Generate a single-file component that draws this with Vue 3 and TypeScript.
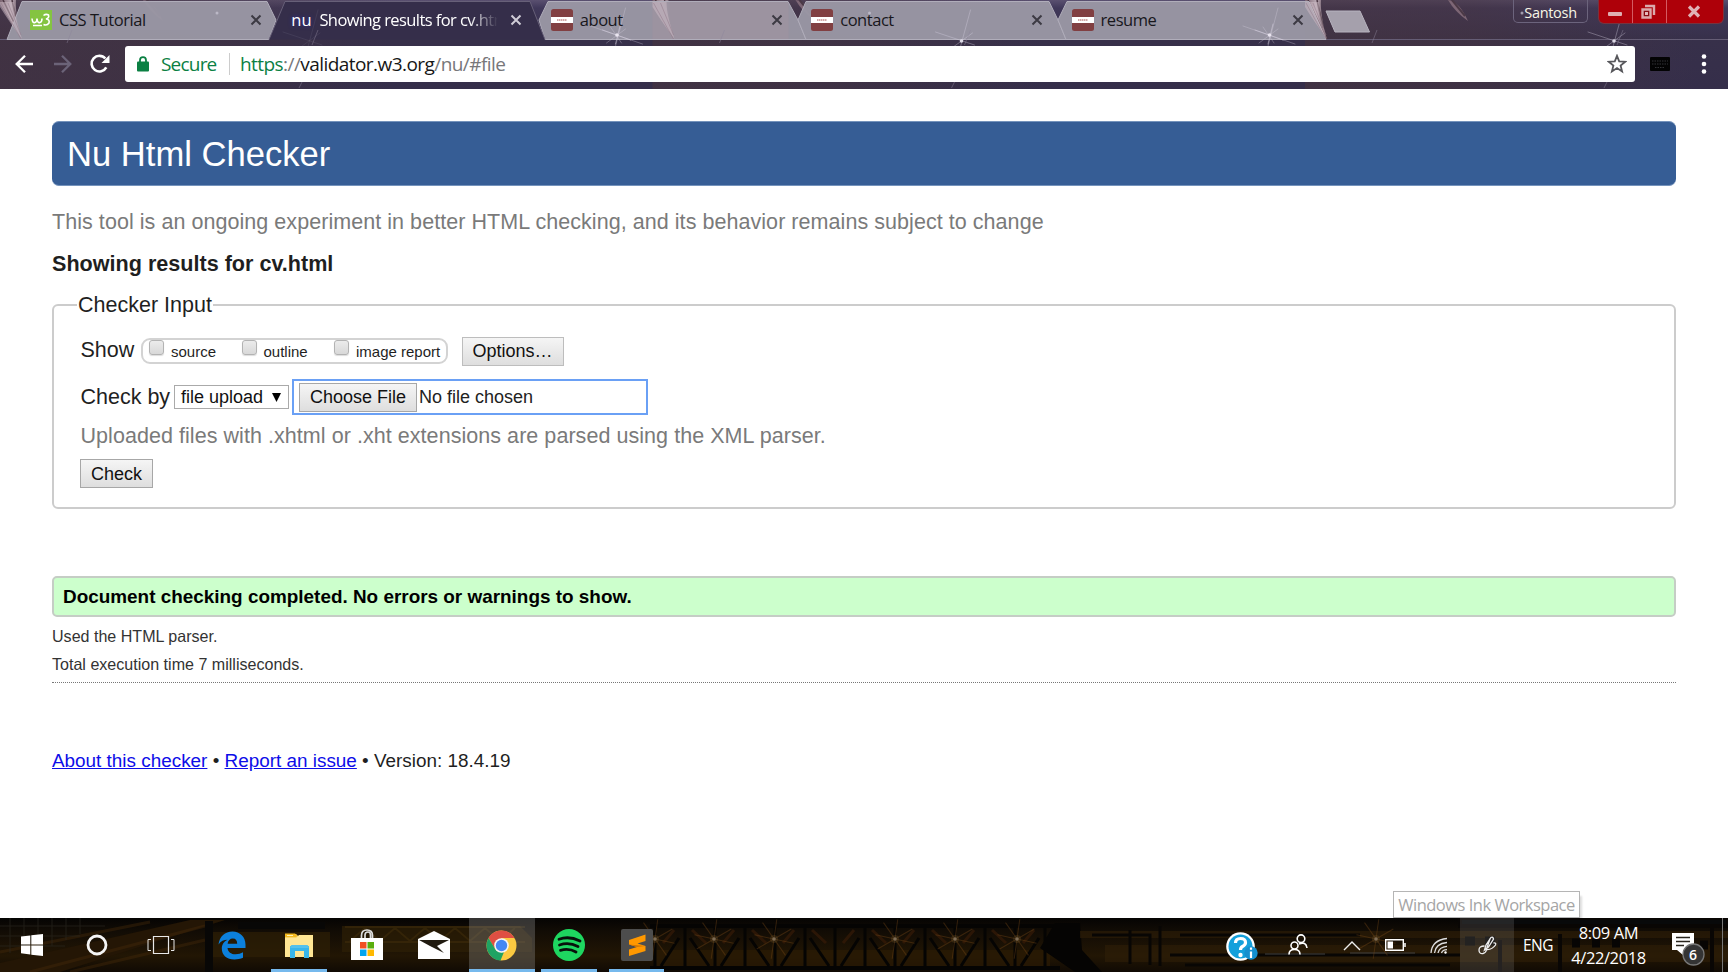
<script setup lang="ts">
interface Tab {
  title: string
  icon: 'w3' | 'nu' | 'site'
  active?: boolean
}

const tabs: Tab[] = [
  { title: 'CSS Tutorial', icon: 'w3' },
  { title: 'Showing results for cv.html', icon: 'nu', active: true },
  { title: 'about', icon: 'site' },
  { title: 'contact', icon: 'site' },
  { title: 'resume', icon: 'site' },
]

const checks: string[] = ['source', 'outline', 'image report']

const tabShapes: string[] = [
  'M7 39.5L22 1.5H267L276 20L269 39.5Z',
  'M545 39.5L539 20L548 1.5H788L798 20L806 39.5Z',
  'M806 39.5L798 20L806 1.5H1049L1058 20L1066 39.5Z',
  'M1066 39.5L1058 20L1067 1.5H1309L1326 39.5Z',
]

const tiles: number[] = [0, 652.5, 1305]
const lamps: number[] = [655, 714, 774, 895, 955, 1017, 1376]
const rays: number[] = [12, 55, 98, 150]
const trusses: number[] = [0, 1, 2, 3, 4, 5, 6]
</script>

<template>
  <div class="screen">
    <header class="browser">
      <svg class="theme" width="1728" height="89" viewBox="0 0 1728 89">
        <defs>
          <linearGradient id="strip" x1="0" y1="0" x2="0" y2="1">
            <stop offset="0" stop-color="#5a5070" />
            <stop offset="0.09" stop-color="#40385a" />
            <stop offset="0.45" stop-color="#37304a" />
            <stop offset="1" stop-color="#352e4a" />
          </linearGradient>
          <linearGradient id="warm" x1="0" y1="0" x2="1" y2="0">
            <stop offset="0" stop-color="#46343f" stop-opacity="0.65" />
            <stop offset="0.3" stop-color="#46343f" stop-opacity="0.55" />
            <stop offset="0.7" stop-color="#46343f" stop-opacity="0" />
          </linearGradient>
          <linearGradient id="feather" x1="0" y1="0" x2="1" y2="0">
            <stop offset="0" stop-color="#8d737e" />
            <stop offset="0.5" stop-color="#dccbd3" />
            <stop offset="1" stop-color="#6a5260" />
          </linearGradient>
        </defs>
        <rect width="1728" height="89" fill="url(#strip)" />
        <rect v-for="t in tiles" :key="'w' + t" :x="t" y="0" width="560" height="89" fill="url(#warm)" />
        <path d="M0 39.5H269M545 39.5H1728" stroke="#655d75" fill="none" />
        <g v-for="t in tiles" :key="'f' + t" :transform="`translate(${t} 0)`">
          <path d="M0 0H16Q15 14 22 40Q10 20 0 4Z" fill="url(#feather)" opacity="0.75" />
          <path d="M3 0L22 39M12 0L18 28" stroke="#4c3844" stroke-width="1.5" fill="none" />
          <path d="M143 0Q154 1 163 21Q150 12 143 0Z" fill="#7d6675" />
          <path d="M147 0L160 16" stroke="#4b3946" stroke-width="2" />
        </g>
        <path v-for="s in tabShapes" :key="s" :d="s" fill="#9a97a4" fill-opacity="0.96" stroke="#b0adba" stroke-width="1" />
        <path d="M269 39.5L285 1.5H530L545 39.5" fill="#352e4a" stroke="#676078" />
        <rect x="652.5" y="2" width="136" height="37" fill="#a594a0" opacity="0.4" />
        <g v-for="t in tiles" :key="'s' + t" :transform="`translate(${t} 0)`">
          <path d="M0 2H14Q14 14 22 39Q8 20 0 7Z" fill="#d0bec7" opacity="0.5" />
          <path d="M1 3L21 39M8 3L21 35" stroke="#8f7887" opacity="0.5" fill="none" />
          <g stroke="#d9d4e4" fill="none" stroke-linecap="round">
            <path d="M-62 26L-10 44M-27 8L-38 50M-46 43L-27 29M-42 27L-31 43" opacity="0.3" />
            <path d="M-50 30L-22 40M-32 24L-37 44" opacity="0.5" />
            <path d="M283 32L322 45M318 10L306 54M298 49L320 33" :opacity="t === 0 ? 0.08 : 0.35" />
          </g>
          <circle cx="-35.500" cy="35" r="1.800" fill="#eeeaf4" opacity="0.9" />
          <circle cx="309" cy="41" :r="t === 0 ? 0 : 1.800" fill="#e8e4ef" opacity="0.9" />
          <circle cx="217" cy="13" r="1.500" fill="#cbc7d5" opacity="0.7" />
          <path d="M72 30L67 43M318 30L312 45M302 82L299 88" stroke="#8d859b" opacity="0.45" />
        </g>
        <path d="M1326 11H1360L1369.500 32H1335Z" fill="#a5a0ac" stroke="#b7b3bf" />
      </svg>

      <div class="strip">
        <div class="tabs">
          <div v-for="tab in tabs" :key="tab.title" class="tab" :class="{ active: tab.active }">
            <svg v-if="tab.icon === 'w3'" class="fav" width="22" height="20" viewBox="0 0 22 20">
              <rect width="22" height="20" fill="#84c441" />
              <path d="M2 8.500Q2.500 13.500 5 12.500Q7 12 7 8.500Q7.500 13.500 10 12.500Q12 12 12 8.500M13.500 5.500Q16 3.500 18.500 5Q19.500 8 16 9Q20 9.500 19 13Q17 16 13.500 14.500M3 15.500H12" stroke="#fff" stroke-width="1.600" fill="none" />
            </svg>
            <span v-else-if="tab.icon === 'nu'" class="fav nu">nu</span>
            <svg v-else class="fav" width="22" height="22" viewBox="0 0 22 22">
              <rect width="22" height="22" rx="2.500" fill="#813f42" />
              <rect y="8" width="22" height="6" fill="#fff" />
              <path d="M6 11H16" stroke="#c58e8d" stroke-width="1.500" stroke-dasharray="1.500 0.500" />
            </svg>
            <span class="tab-title">{{ tab.title }}</span>
            <svg class="close" width="12" height="12" viewBox="0 0 12 12">
              <path d="M1.500 1.500L10.500 10.500M10.500 1.500L1.500 10.500" stroke="currentColor" stroke-width="2" />
            </svg>
          </div>
        </div>
        <div class="user">Santosh</div>
        <div class="controls">
          <span class="ctl min"><i></i></span>
          <span class="ctl restore">
            <svg width="18" height="18" viewBox="0 0 18 18">
              <path d="M6 3H15V12" stroke="#dba9ac" stroke-width="2.400" fill="none" />
              <path d="M3.500 6.500H11.500V14.500H3.500Z" stroke="#dba9ac" stroke-width="2.400" fill="#8a0a12" />
              <rect x="6" y="9" width="3" height="3" fill="#e5b9bb" />
            </svg>
          </span>
          <span class="ctl quit">
            <svg width="14" height="13" viewBox="0 0 14 13">
              <path d="M2 1.500L12 11.500M12 1.500L2 11.500" stroke="#e0b2b5" stroke-width="3.200" />
            </svg>
          </span>
        </div>
      </div>

      <div class="toolbar">
        <svg class="nav" width="125" height="36" viewBox="0 0 125 36" fill="none">
          <path d="M33 18H17M25 9.700L16.700 18L25 26.300" stroke="#fff" stroke-width="2.300" />
          <path d="M54 18H70M62 9.700L70.300 18L62 26.300" stroke="#6b6378" stroke-width="2.300" />
          <path d="M106.300 21.300A7.800 7.800 0 1 1 105.300 12.500" stroke="#fff" stroke-width="2.600" />
          <path d="M109.500 9V17H101.500Z" fill="#fff" />
        </svg>
        <div class="omnibox">
          <svg class="lock" width="12" height="16" viewBox="0 0 12 16">
            <rect x="0" y="5.500" width="12" height="10" rx="1" fill="#0b8043" />
            <path d="M3 6V4.200A3 3 0 0 1 9 4.200V6" stroke="#0b8043" stroke-width="1.800" fill="none" />
          </svg>
          <span class="secure">Secure</span>
          <span class="bar"></span>
          <span class="url"><em>https</em>://<b>validator.w3.org</b>/nu/#file</span>
          <svg class="star" width="20" height="20" viewBox="0 0 20 20">
            <path d="M10 1.800L12.200 7.300L18.200 7.700L13.600 11.500L15.100 17.400L10 14.100L4.900 17.400L6.400 11.500L1.800 7.700L7.800 7.300Z" fill="none" stroke="#57575b" stroke-width="1.800" />
          </svg>
        </div>
        <svg class="keyboard" width="20" height="14" viewBox="0 0 20 14">
          <rect width="20" height="14" rx="1" fill="#030304" />
          <path d="M2 4H18M2 7H18M5 10.500H15" stroke="#343438" stroke-dasharray="1.500 1" />
        </svg>
        <svg class="dots" width="6" height="22" viewBox="0 0 6 22" fill="#fff">
          <circle cx="3" cy="3.500" r="2.300" /><circle cx="3" cy="11" r="2.300" /><circle cx="3" cy="18.500" r="2.300" />
        </svg>
      </div>
    </header>

    <main class="page">
      <h1>Nu Html Checker</h1>
      <p class="intro">This tool is an ongoing experiment in better HTML checking, and its behavior remains subject to change</p>
      <h2>Showing results for cv.html</h2>

      <section class="fieldset">
        <div class="legend">Checker Input</div>
        <div class="row show-row">
          <span class="label show-label">Show</span>
          <div class="checks">
            <label v-for="c in checks" :key="c"><i class="box"></i>{{ c }}</label>
          </div>
          <button class="btn options" type="button">Options…</button>
        </div>
        <div class="row by-row">
          <span class="label by-label">Check by</span>
          <div class="select">file upload<svg width="9" height="9" viewBox="0 0 9 9"><path d="M0 0H9L4.500 9Z" /></svg></div>
          <div class="file">
            <button class="btn choose" type="button">Choose File</button>
            <span>No file chosen</span>
          </div>
        </div>
        <p class="hint">Uploaded files with .xhtml or .xht extensions are parsed using the XML parser.</p>
        <button class="btn check" type="button">Check</button>
      </section>

      <p class="success">Document checking completed. No errors or warnings to show.</p>
      <p class="detail">Used the HTML parser.</p>
      <p class="detail">Total execution time 7 milliseconds.</p>
      <div class="rule"></div>
      <footer><a>About this checker</a> • <a>Report an issue</a> • <span>Version: 18.4.19</span></footer>
    </main>

    <div class="taskbar">
      <div class="tooltip">Windows Ink Workspace</div>
      <svg class="wall" width="1728" height="54" viewBox="0 0 1728 54">
        <defs>
          <linearGradient id="ground" x1="0" y1="0" x2="0" y2="1">
            <stop offset="0" stop-color="#050403" />
            <stop offset="0.25" stop-color="#120c05" />
            <stop offset="0.7" stop-color="#221604" />
            <stop offset="1" stop-color="#100a04" />
          </linearGradient>
        </defs>
        <rect width="1728" height="54" fill="url(#ground)" />
        <path d="M0 45L190 2H225L60 54H0Z" fill="#241605" />
        <path d="M0 34L150 4M30 54L205 8M70 54L205 22" stroke="#472b0a" stroke-width="3" opacity="0.4" />
        <path d="M0 8H105M0 18H80M0 28H65M10 0V35M24 0V33M38 0V30M52 0V28M66 0V22M80 0V16" stroke="#2d2b22" opacity="0.6" />
        <path d="M205 3H213V54H205ZM238 4H325V11H238Z" fill="#080706" />
        <path d="M213 14H330V39H213ZM342 8H520L532 20V34H342Z" fill="#2e2006" opacity="0.7" />
        <path d="M345 9H525M345 24H525M350 23L365 10L380 23L395 10L410 23L425 10L440 23L455 10L470 23L485 10L500 23L515 10" stroke="#4a340c" stroke-width="2" fill="none" opacity="0.4" />
        <rect x="655" y="32" width="395" height="18" fill="#2d1c05" opacity="0.65" />
        <path d="M650 8H1060M650 50H1060" stroke="#050403" stroke-width="4" />
        <g v-for="n in trusses" :key="n" :transform="`translate(${655 + n * 60} 0)`">
          <path d="M0 10V48M6 48L24 20M54 48L35 20M30 10V48" stroke="#050403" stroke-width="3" fill="none" />
          <path d="M8 25L19 12M37 12L51 25" stroke="#3c1d08" stroke-width="3" opacity="0.6" />
        </g>
        <path d="M1055 5H1080L1082 32L1102 54H1075L1040 30Z" fill="#050403" />
        <path d="M1080 13H1728V20H1080ZM1105 27H1728V44H1105Z" fill="#2e1e08" opacity="0.62" />
        <path d="M1092 17H1150V47M1130 12V46M1160 8V48M1170 37H1460M1180 17H1360M1185 47H1450" stroke="#080604" stroke-width="3" fill="none" />
        <path d="M1350 35H1415M1265 36H1325" stroke="#404040" stroke-width="2" opacity="0.5" />
        <path d="M1460 0H1728V8H1460ZM1500 22V54M1560 16V54M1712 8V54" fill="#08090a" stroke="#090604" stroke-width="4" />
        <path d="M1465 23H1475M1485 23H1495M1572 25H1580M1592 25H1600M1612 25H1620M1700 27H1708" stroke="#070504" stroke-width="9" />
        <g v-for="x in lamps" :key="x" :transform="`translate(${x} 21)`">
          <path v-for="r in rays" :key="r" d="M-20 0H20" :transform="`rotate(${r})`" stroke="#7a4a18" opacity="0.38" />
          <circle r="4" fill="#6b5028" opacity="0.35" />
          <circle r="1.800" fill="#8f8270" opacity="0.7" />
        </g>
      </svg>

      <div class="apps">
        <span class="app sys">
          <svg width="22" height="22" viewBox="0 0 22 22" fill="#fff"><path d="M0 2.600L9.300 1.500V10.400H0ZM10.300 1.300L22 0V10.400H10.300ZM0 11.400H9.300V20.500L0 19.300ZM10.300 11.400H22V22L10.300 20.700Z" /></svg>
        </span>
        <span class="app sys">
          <svg width="22" height="22" viewBox="0 0 22 22"><circle cx="11" cy="11" r="9" fill="none" stroke="#f5f5f5" stroke-width="2.800" /></svg>
        </span>
        <span class="app sys">
          <svg width="28" height="20" viewBox="0 0 28 20" fill="none" stroke="#e8e8e8"><path d="M6.500 1.500H21.500V18.500H6.500Z" stroke-width="1.200" /><path d="M4 4.500H1V15.500H4M24 4.500H27V15.500H24" stroke-width="1" /></svg>
        </span>
        <span class="gap"></span>
        <span class="app">
          <svg width="28" height="29" viewBox="0 0 28 29"><path d="M.5 13.500C1.500 5.500 7 .5 14.500 .5C22 .5 27.500 6 27.500 13.500V17H9.500C10 21 13 23.300 17.500 23.300C20.500 23.300 23 22.500 25 21.300V26.800C22.500 28 19.500 28.500 16.500 28.500C8.500 28.500 3.800 24 3.800 17.500C3.800 13.500 6 10.300 9.500 8.700C6 8.700 2.700 10 .5 13.500ZM9.600 12.700H19.200C19.200 9.500 17.800 7.500 14.800 7.500C12 7.500 10 9.500 9.600 12.700Z" fill="#0c80dc" /></svg>
        </span>
        <span class="app running">
          <svg width="30" height="26" viewBox="0 0 30 26"><path d="M1 2H12L14 4H29V25H1Z" fill="#f8d56a" /><path d="M1 6H12L15 3H29V25H1Z" fill="#ffe694" /><path d="M1 1.500H11L13.500 4L12 5H1Z" fill="#f3b91e" /><path d="M3 3.500H9" stroke="#fff1b5" /><path d="M6 14.500L8 13H23L25 14.500V26H20V19H11V26H6Z" fill="#38b5ea" /><path d="M8 13H23L25 16H6Z" fill="#55c1ec" /></svg>
        </span>
        <span class="app">
          <svg width="32" height="32" viewBox="0 0 32 32"><path d="M10.500 9V6.500Q10.500 1 16 1Q21.500 1 21.500 6.500V9M14 9V6Q14 3 17 3Q19.500 3 19.500 6V9" fill="none" stroke="#ddd" stroke-width="1.700" /><path d="M0 9H32V31H0Z" fill="#fff" /><path d="M9 13H15.500V19.500H9Z" fill="#f25022" /><path d="M16.500 13H23V19.500H16.500Z" fill="#5aae0d" /><path d="M9 20.500H15.500V27H9Z" fill="#00a4ef" /><path d="M16.500 20.500H23V27H16.500Z" fill="#ffb900" /></svg>
        </span>
        <span class="app">
          <svg width="32" height="28" viewBox="0 0 32 28"><path d="M0 8L16 0L32 8V28H0Z" fill="#fff" /><path d="M1 9H31L19 15L26 22L12 15Z" fill="#211b10" /></svg>
        </span>
        <span class="app running current">
          <svg width="31" height="31" viewBox="0 0 31 31"><circle cx="15.500" cy="15.500" r="15" fill="#fbc941" /><path d="M2.500 8A15 15 0 0 1 28.500 8H15.500L9 19Z" fill="#df4f43" /><path d="M2.500 8L9.500 19.500Q12 23 18 22L14.500 30.500A15 15 0 0 1 2.500 8Z" fill="#1fa363" /><circle cx="15.500" cy="15.500" r="7.300" fill="#f4f4f4" /><circle cx="15.500" cy="15.500" r="5.700" fill="#4487f4" /></svg>
        </span>
        <span class="app running">
          <svg width="32" height="32" viewBox="0 0 32 32"><circle cx="16" cy="16" r="16" fill="#1ed760" /><path d="M6 10.300Q16 6.500 27 12M6.500 16Q16 12.800 25 17.500M7.500 21.300Q16 19 23 23" stroke="#08120b" fill="none" stroke-width="2.800" stroke-linecap="round" /></svg>
        </span>
        <span class="app running">
          <svg width="32" height="32" viewBox="0 0 32 32"><rect width="32" height="32" rx="2" fill="#4d4d4d" /><path d="M8 11L24.500 5.500V12L16.500 14.500L24.500 17V22L8 27V20.500L16 18L8 15.500Z" fill="#ff9800" /><path d="M8 15.500L24.500 17L16 18Z" fill="#d37600" /></svg>
        </span>
      </div>

      <div class="tray">
        <span class="cell help">
          <svg width="32" height="30" viewBox="0 0 32 30"><circle cx="14.500" cy="14.500" r="14.300" fill="#fff" /><circle cx="14.500" cy="14.500" r="12" fill="#14a0db" /><path d="M9.500 11Q9.500 6.500 14.500 6.500Q19.500 6.500 19.500 10.500Q19.500 13 16.500 14.500Q14.500 15.500 14.500 18" stroke="#fff" stroke-width="3.200" fill="none" /><circle cx="14.500" cy="23" r="2.200" fill="#fff" /><circle cx="25" cy="21" r="6.700" fill="#148fce" /><path d="M25 19.500V26M25 15.500V17.800" stroke="#fff" stroke-width="2.200" /></svg>
        </span>
        <span class="cell people">
          <svg width="20" height="22" viewBox="0 0 20 22" fill="none" stroke="#fff" stroke-width="1.600"><circle cx="6.500" cy="11.500" r="3.500" /><path d="M1 20.500Q1 15.500 6.500 15.500Q12 15.500 12 20.500" /><circle cx="13" cy="4.700" r="3.800" /><path d="M11 10Q18 7 19 14" /></svg>
        </span>
        <span class="cell arrow">
          <svg width="18" height="11" viewBox="0 0 18 11"><path d="M1 10L9 2L17 10" fill="none" stroke="#eee" stroke-width="1.400" /></svg>
        </span>
        <span class="cell battery">
          <svg width="21" height="12" viewBox="0 0 21 12"><path d="M.7 .7H18.300V11.300H.7Z" fill="none" stroke="#fff" stroke-width="1.400" /><path d="M2.500 2.500H8V9.500H2.500Z" fill="#fff" /><path d="M20 4V8" stroke="#fff" stroke-width="1.500" /></svg>
        </span>
        <span class="cell wifi">
          <svg width="18" height="18" viewBox="0 0 18 18" fill="none" stroke="#ddd" stroke-width="1.300"><path d="M1 16Q2 3 17 1.500M4.500 16Q5.500 6.500 17 5.500M8 16Q9 10 17 9.300M11.500 16Q12.500 13 17 12.700" /><circle cx="15.500" cy="15.500" r="1.200" fill="#fff" stroke="none" /></svg>
        </span>
        <span class="cell pen">
          <svg width="19" height="19" viewBox="0 0 19 19" fill="none" stroke="#eee" stroke-width="1.300"><path d="M6.500 14L8 9L13 1.500Q15 .5 15.500 3L10.500 11L6.500 14ZM12 3L8.500 13" /><path d="M6.500 10Q1 10 1 14Q1 18 5 17.500Q8 17 8.500 13.500Q14 14 17.500 9Q18.500 6.500 15.500 7" /></svg>
        </span>
        <span class="cell lang">ENG</span>
        <span class="cell clock"><span>8:09 AM</span><span>4/22/2018</span></span>
        <span class="cell notes">
          <svg width="34" height="34" viewBox="0 0 34 34"><path d="M0 1H22V18H11V23L5 18H0Z" fill="#fff" /><path d="M4 5.500H18M4 9.500H18M4 13.500H12" stroke="#29251d" stroke-width="1.300" /><circle cx="21.500" cy="22.500" r="10.500" fill="#343434" stroke="#777" stroke-width="1.300" /></svg>
          <b>6</b>
        </span>
        <span class="edge"></span>
      </div>
    </div>
  </div>
</template>

<style>
html,
body {
  margin: 0;
  background: #fff;
}
</style>

<style scoped>
.screen {
  width: 1728px;
  height: 972px;
  overflow: hidden;
  display: flex;
  flex-direction: column;
  background: #fff;
  color: #1f1f1f;
  font-family: "Liberation Sans", Arial, sans-serif;
}
svg { display: block; flex: none; }
p, h1, h2 { margin: 0; font-weight: normal; }

.browser {
  position: relative;
  height: 89px;
  flex: none;
  font-family: "Open Sans", "Noto Sans", sans-serif;
}
.theme { position: absolute; inset: 0; }
.strip { position: relative; display: flex; height: 40px; }
.tabs { display: flex; padding-left: 30px; width: 1483px; box-sizing: border-box; }
.tab {
  width: 260.400px;
  height: 40px;
  flex: none;
  display: flex;
  align-items: center;
  color: #18171c;
  font-size: 16.500px;
  letter-spacing: -0.450px;
}
.tab.active { color: #fff; letter-spacing: -0.580px; }
.fav { width: 22px; flex: none; }
.nu { font-size: 16.500px; line-height: 20px; color: #fff; text-shadow: 0 0 4px #2b2ba0; letter-spacing: 0; text-align: center; }
.tab-title { width: 179px; margin-left: 7px; overflow: hidden; white-space: nowrap; line-height: 24px; }
.tab.active .tab-title {
  -webkit-mask-image: linear-gradient(90deg, #000 150px, transparent 179px);
  mask-image: linear-gradient(90deg, #000 150px, transparent 179px);
}
.close { margin-left: 12px; color: #3c3a43; }
.tab.active .close { color: #cfccd6; }
.user {
  margin-left: 30px;
  width: 75px;
  height: 23px;
  box-sizing: border-box;
  border: 1px solid #6c647d;
  border-top: 0;
  border-radius: 0 0 5px 5px;
  color: #f8f6e6;
  font-size: 14.500px;
  line-height: 25px;
  letter-spacing: -0.300px;
  text-align: center;
}
.controls { display: flex; margin-left: 11px; width: 124px; height: 23px; border-radius: 0 0 5px 5px; overflow: hidden; background: #ae0009; box-shadow: 0 0 0 1px #77333f; }
.ctl { display: flex; align-items: center; justify-content: center; border-right: 1px solid #d45a62; box-sizing: border-box; width: 34px; }
.ctl.restore svg { margin-right: 3px; }
.ctl.quit svg { margin-right: 2px; }
.ctl.min i { width: 14px; height: 4px; background: #dfafb2; margin: 5px 2px 0 0; border-radius: 1px; }
.ctl.quit { width: 56px; border: 0; }

.toolbar { position: relative; display: flex; align-items: center; height: 36px; margin-top: 6px; }
.omnibox { width: 1510px; height: 36px; box-sizing: border-box; padding: 0 8px 0 12px; background: #fff; border-radius: 3px; display: flex; align-items: center; font-size: 19px; }
.secure { margin-left: 12px; width: 56px; color: #0b8043; letter-spacing: -0.800px; white-space: nowrap; }
.bar { width: 1px; height: 22px; background: #ccc; margin: 0 10px 0 12px; }
.url { color: #77777a; letter-spacing: -0.560px; }
.url em { color: #0b8043; font-style: normal; }
.url b { color: #161616; font-weight: normal; }
.star { margin-left: auto; }
.keyboard { margin-left: 15px; }
.dots { margin-left: 31px; }

.page { flex: 1; padding: 32px 52px 0; display: flex; flex-direction: column; align-items: flex-start; }
h1 { align-self: stretch; height: 65px; box-sizing: border-box; padding-left: 15px; border-radius: 7px; background: #365d95; border: 1px solid #7593bc; border-width: 1px 0; color: #fff; font-size: 34.600px; line-height: 65px; }
.intro { margin-top: 21px; height: 30px; line-height: 30px; font-size: 21.500px; letter-spacing: 0.052px; color: #7a7a7a; white-space: nowrap; }
h2 { margin-top: 12px; height: 30px; line-height: 30px; font-size: 21.580px; font-weight: bold; }
.fieldset { position: relative; align-self: stretch; margin-top: 25px; height: 205px; box-sizing: border-box; border: 2px solid #ccc; border-radius: 6px; padding: 26px 0 0 26px; }
.legend { position: absolute; left: 23px; top: -16px; padding: 0 1px; height: 30px; line-height: 30px; background: #fff; font-size: 21.500px; }
.row { display: flex; align-items: center; }
.label { font-size: 21.500px; white-space: nowrap; line-height: 30px; padding-left: 0.500px; box-sizing: border-box; }
.show-row { height: 36px; }
.show-label { width: 61px; }
.checks { width: 307px; height: 26px; box-sizing: border-box; border: 2px solid #d3d3d3; border-radius: 9px; display: flex; padding-left: 6px; font-size: 15px; margin-top: 2px; }
.checks label { display: flex; width: 92.500px; line-height: 24px; white-space: nowrap; flex: none; }
.box { flex: none; width: 13px; height: 13px; border: 1px solid #b3b3b3; border-radius: 3px; background: linear-gradient(#ececec, #d8d8d8); margin-right: 7px; box-shadow: 0 1px 1px #ddd; }
.btn { font-family: inherit; font-size: 18px; color: #111; box-sizing: border-box; height: 29px; padding: 0; border: 1px solid #a7a7a7; border-radius: 0; background: linear-gradient(#f5f5f5, #dedede); white-space: nowrap; line-height: 26px; }
.options { width: 102px; margin-left: 13.500px; border-color: #bdbdbd; margin-top: 3px; line-height: 25px; }
.by-row { height: 36px; margin-top: 11px; }
.by-label { width: 94px; }
.select { width: 115px; height: 24px; box-sizing: border-box; border: 1px solid #aaa; display: flex; align-items: center; padding-left: 6px; font-size: 18px; color: #111; white-space: nowrap; }
.select svg { margin-left: 9px; }
.file { width: 356px; height: 36px; margin-left: 3px; box-sizing: border-box; border: 2px solid #6aa0f5; display: flex; align-items: center; padding-left: 5px; font-size: 18px; color: #222; }
.choose { width: 118px; margin-right: 2px; }
.hint { margin: 6px 0 0 0.500px; height: 30px; line-height: 30px; font-size: 21.500px; letter-spacing: 0.052px; color: #7a7a7a; white-space: nowrap; }
.check { display: block; width: 73px; margin-top: 8px; }
.success { align-self: stretch; margin-top: 67px; height: 41px; box-sizing: border-box; border: 2px solid #c5cdc5; border-radius: 5px; background: #cfc; padding-left: 9px; font-size: 18.910px; line-height: 37px; font-weight: bold; color: #000; }
.detail { font-size: 16.070px; height: 28px; line-height: 28px; color: #333; }
.success + .detail { margin-top: 5px; }
.rule { align-self: stretch; margin-top: 4px; border-top: 1px dotted #777; }
footer { margin-top: 63px; height: 30px; line-height: 30px; font-size: 18.900px; white-space: nowrap; }
footer a { color: #0d0de8; text-decoration: underline; }

.taskbar { position: relative; height: 54px; flex: none; display: flex; justify-content: space-between; font-family: "Open Sans", "Noto Sans", sans-serif; color: #fff; background: #120c05; }
.wall { position: absolute; inset: 0; }
.tooltip { position: absolute; left: 1393px; top: -27px; width: 187px; height: 27px; box-sizing: border-box; border: 1px solid #b5b5b5; background: #fff; box-shadow: 3px 4px 2px -1px #ddd; color: #a5a5a5; font-size: 16.500px; line-height: 26px; text-align: center; letter-spacing: -0.500px; white-space: nowrap; }
.apps, .tray { position: relative; display: flex; height: 54px; }
.app { position: relative; width: 67.500px; display: flex; align-items: center; justify-content: center; }
.app.sys { width: 64.600px; }
.gap { width: 4px; }
.running::after { content: ""; position: absolute; bottom: 0; left: 6px; right: 6px; height: 3px; background: #76b9ed; }
.running.current { background: rgba(150, 150, 150, 0.33); width: 66px; margin: 0 0.750px; }
.running.current::after { left: 0; right: 0; }
.cell { display: flex; align-items: center; justify-content: center; }
.help { width: 54px; }
.help svg { margin: 3px 0 0 3px; }
.people { width: 60px; }
.people svg { margin-bottom: 1px; margin-left: 2px; }
.arrow { width: 49px; }
.battery { width: 41px; }
.battery svg { margin-right: 2px; }
.wifi { width: 43px; }
.wifi svg { margin-top: 2px; }
.pen { width: 54px; background: rgba(150, 150, 150, 0.2); }
.lang { width: 48px; font-size: 15.500px; letter-spacing: -0.500px; }
.clock { width: 93px; margin-right: 2px; flex-direction: column; font-size: 16.500px; letter-spacing: -0.400px; }
.clock span { height: 25px; line-height: 26px; white-space: nowrap; }
.notes { position: relative; width: 65px; }
.notes svg { margin: 7px 2px 0 0; }
.notes b { position: absolute; left: 26px; top: 27px; width: 20px; text-align: center; font-size: 14px; line-height: 20px; font-weight: 600; }
.edge { width: 5px; border-left: 1px solid #777; }
</style>
